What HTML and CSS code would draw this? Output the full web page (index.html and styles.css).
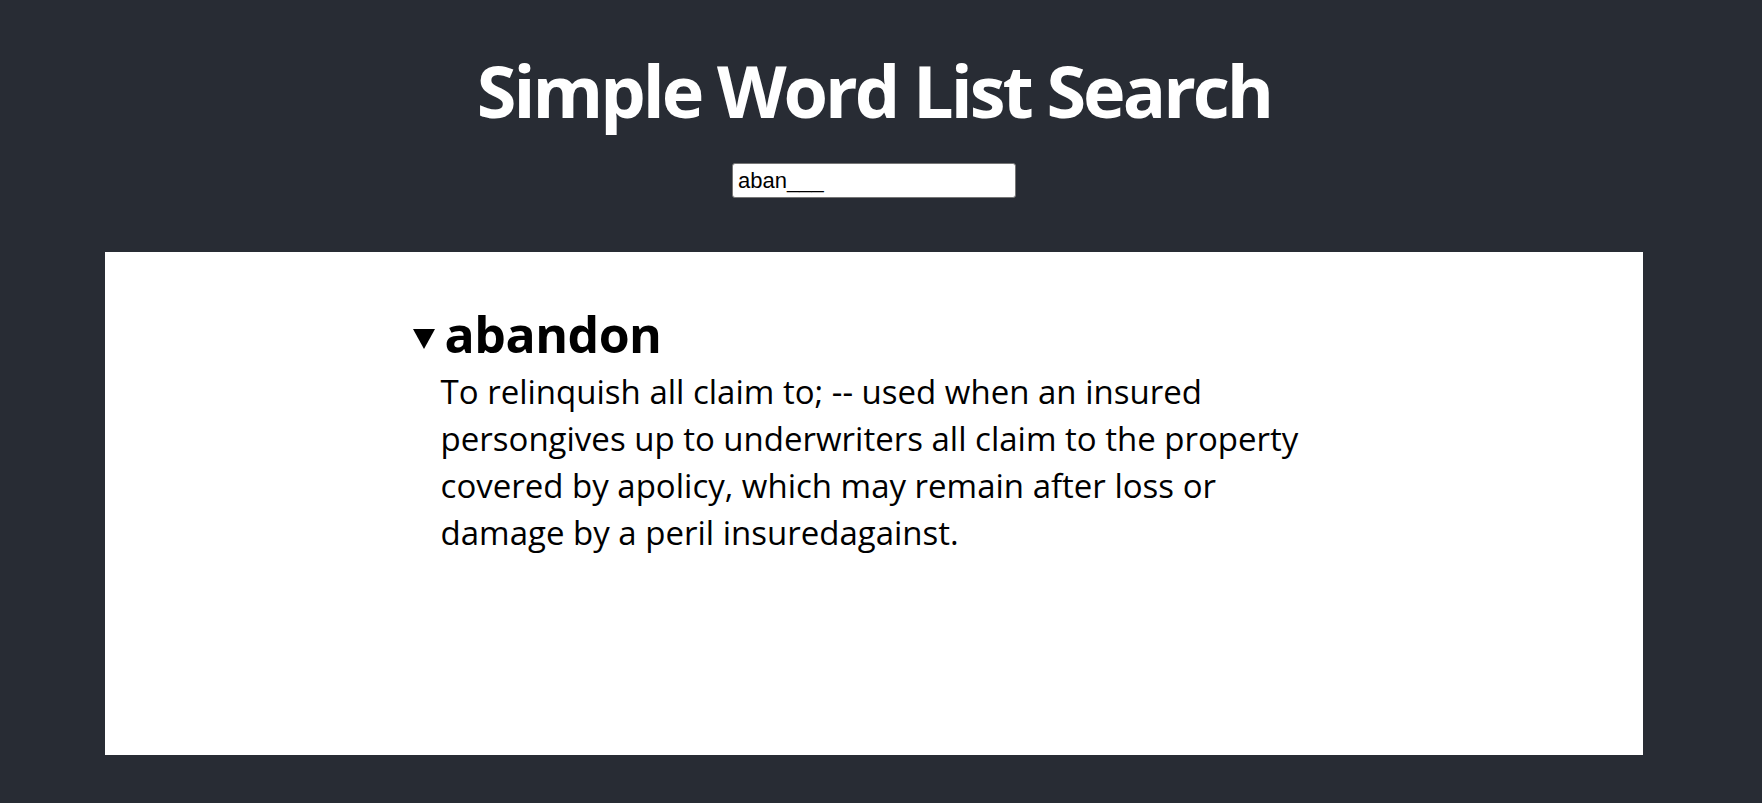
FILE: index.html
```html
<!DOCTYPE html>
<html lang="en">
<head>
<meta charset="utf-8">
<title>Simple Word List Search</title>
<link rel="stylesheet" href="styles.css">
</head>
<body>
<div class="app">
  <header class="header">
    <h1 class="title">Simple Word List Search</h1>
    <input class="search" type="text" value="aban___">
  </header>
  <main class="panel">
    <div class="entry">
      <div class="word-row">
        <span class="caret"></span>
        <h2 class="word">abandon</h2>
      </div>
      <p class="definition">To relinquish all claim to; -- used when an insured persongives up to underwriters all claim to the property covered by apolicy, which may remain after loss or damage by a peril insuredagainst.</p>
    </div>
  </main>
</div>
</body>
</html>
```

FILE: styles.css
```css
html, body {
  margin: 0;
  background: #282c34;
}
body {
  font-family: "Open Sans", "Noto Sans", sans-serif;
}
.app {
  width: 1748px;
}
.header {
  display: flex;
  flex-direction: column;
  align-items: center;
  padding-top: 47px;
}
.title {
  margin: 0;
  color: #ffffff;
  font-size: 72px;
  line-height: 86px;
  font-weight: 700;
  letter-spacing: -3px;
}
.search {
  margin-top: 30px;
  width: 284px;
  height: 35px;
  box-sizing: border-box;
  padding: 0 5px;
  font-family: "Liberation Sans", Arial, sans-serif;
  font-size: 22px;
  color: #000;
  background: #fff;
  border: 1px solid #767676;
  border-radius: 3px;
}
.panel {
  margin: 54px 105px 0;
  height: 503px;
  background: #ffffff;
  padding-top: 53px;
  box-sizing: border-box;
}
.entry {
  width: 60%;
  margin: 0 auto;
}
.word-row {
  display: flex;
  align-items: center;
  gap: 10px;
}
.caret {
  width: 0;
  height: 0;
  border-left: 11px solid transparent;
  border-right: 11px solid transparent;
  border-top: 20px solid #000;
  margin-top: 10px;
}
.word {
  margin: 0;
  font-size: 50px;
  line-height: 58px;
  font-weight: 700;
  color: #000;
  letter-spacing: -0.5px;
}
.definition {
  margin: 5px 0 0 28px;
  font-size: 33px;
  line-height: 47px;
  color: #000;
}
```
